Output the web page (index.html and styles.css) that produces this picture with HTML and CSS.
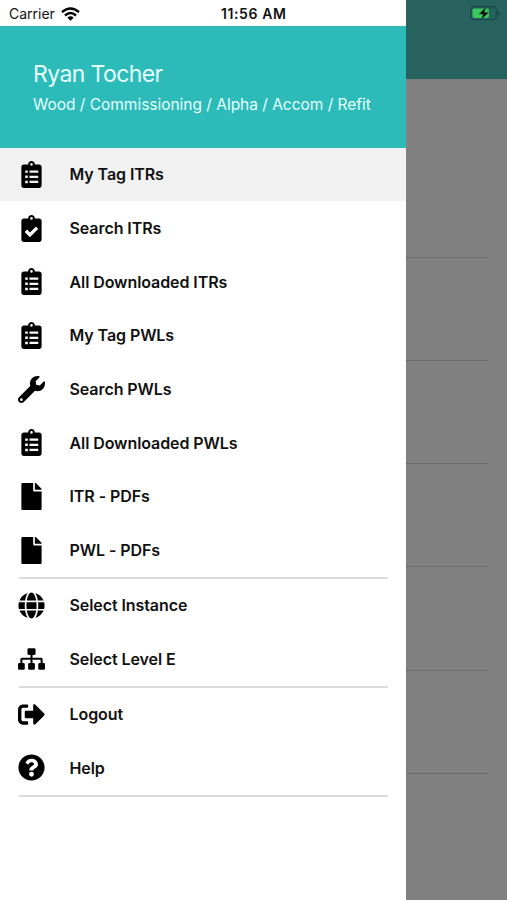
FILE: index.html
```html
<!DOCTYPE html>
<html lang="en">
<head>
  <meta charset="UTF-8" />
  <meta name="viewport" content="width=device-width, initial-scale=1" />
  <title>My Tag ITRs</title>
  <link rel="stylesheet" href="styles.css">
</head>
<body>

  <!-- icons used more than once -->
  <svg class="sprite">
    <symbol id="clipboard-list" viewBox="0 0 384 512">
      <path fill-rule="evenodd" d="M336 64h-80c0-35.300-28.700-64-64-64s-64 28.700-64 64H48C21.500 64 0 85.500 0 112v352c0 26.500 21.500 48 48 48h288c26.500 0 48-21.500 48-48V112c0-26.500-21.500-48-48-48zM192 40a24 24 0 1 1 0 48 24 24 0 0 1 0-48zM72 178h50v46H72zm0 98h50v46H72zm0 98h50v46H72zM154 180h166v42H154zm0 98h166v42H154zm0 98h166v42H154z"/>
    </symbol>
    <symbol id="file" viewBox="0 0 384 512">
      <path d="M224 136V0H24C10.700 0 0 10.700 0 24v464c0 13.300 10.700 24 24 24h336c13.300 0 24-10.700 24-24V160H248c-13.200 0-24-10.800-24-24zm160-14.100v6.100H256V0h6.100c6.400 0 12.500 2.500 17 7l97.900 98c4.500 4.500 7 10.600 7 16.900z"/>
    </symbol>
  </svg>

  <div class="phone">

    <!-- screen behind the drawer -->
    <div class="page">
      <div class="page-header"></div>
      <div class="page-row first"></div>
      <div class="page-row"></div>
      <div class="page-row"></div>
      <div class="page-row"></div>
      <div class="page-row"></div>
      <div class="page-row"></div>
    </div>

    <!-- drawer -->
    <div class="drawer">
      <div class="profile">
        <div class="name">Ryan Tocher</div>
        <div class="level">Wood / Commissioning / Alpha / Accom / Refit</div>
      </div>

      <div class="menu">
        <a class="item active"><span class="icon"><svg width="21" height="27"><use href="#clipboard-list"/></svg></span><span>My Tag ITRs</span></a>
        <a class="item"><span class="icon"><svg width="21" height="27" viewBox="0 0 384 512"><path fill-rule="evenodd" d="M336 64h-80c0-35.300-28.700-64-64-64s-64 28.700-64 64H48C21.500 64 0 85.500 0 112v352c0 26.500 21.500 48 48 48h288c26.500 0 48-21.500 48-48V112c0-26.500-21.500-48-48-48zM192 40a24 24 0 1 1 0 48 24 24 0 0 1 0-48zm121.200 231.800l-143 141.800c-4.700 4.700-12.300 4.600-17-.1l-82.600-83.300c-4.700-4.700-4.600-12.300.1-17L99.100 285c4.700-4.700 12.300-4.600 17 .1l46 46.400 106-105.200c4.700-4.700 12.300-4.600 17 .1l28.200 28.400c4.700 4.700 4.600 12.300-.1 17z"/></svg></span><span>Search ITRs</span></a>
        <a class="item"><span class="icon"><svg width="21" height="27"><use href="#clipboard-list"/></svg></span><span>All Downloaded ITRs</span></a>
        <a class="item"><span class="icon"><svg width="21" height="27"><use href="#clipboard-list"/></svg></span><span>My Tag PWLs</span></a>
        <a class="item"><span class="icon"><svg width="27" height="27" viewBox="0 0 512 512"><path fill-rule="evenodd" d="M507.730 109.100c-2.240-9.030-13.540-12.090-20.120-5.510l-74.360 74.360-67.880-11.310-11.310-67.880 74.360-74.360c6.620-6.620 3.430-17.900-5.660-20.160-47.380-11.740-99.550.91-136.580 37.930-39.640 39.640-50.550 97.100-34.050 147.200L18.740 402.760c-24.990 24.990-24.990 65.510 0 90.500 24.990 24.990 65.510 24.990 90.500 0l213.210-213.210c50.120 16.710 107.470 5.680 147.370-34.220 37.070-37.070 49.700-89.320 37.910-136.730zM64 472a24 24 0 1 1 0-48 24 24 0 0 1 0 48z"/></svg></span><span>Search PWLs</span></a>
        <a class="item"><span class="icon"><svg width="21" height="27"><use href="#clipboard-list"/></svg></span><span>All Downloaded PWLs</span></a>
        <a class="item"><span class="icon"><svg width="21" height="27"><use href="#file"/></svg></span><span>ITR - PDFs</span></a>
        <a class="item"><span class="icon"><svg width="21" height="27"><use href="#file"/></svg></span><span>PWL - PDFs</span></a>
        <div class="divider"></div>
        <a class="item"><span class="icon"><svg width="27" height="27" viewBox="0 0 496 512"><path d="M336.500 160C322 70.700 287.800 8 248 8s-74 62.700-88.500 152h177zM152 256c0 22.200 1.200 43.500 3.300 64h185.300c2.100-20.500 3.300-41.800 3.300-64s-1.200-43.500-3.300-64H155.300c-2.100 20.500-3.300 41.800-3.300 64zm324.700-96c-28.600-67.900-86.500-120.400-158-141.600 24.400 33.800 41.200 84.700 50 141.600h108zM177.200 18.400C105.800 39.600 47.800 92.100 19.300 160h108c8.700-56.900 25.500-107.800 49.900-141.600zM487.400 192H372.700c2.100 21 3.300 42.500 3.300 64s-1.200 43-3.300 64h114.600c5.500-20.500 8.600-41.800 8.600-64s-3.100-43.500-8.500-64zM120 256c0-21.500 1.200-43 3.300-64H8.600C3.200 212.500 0 233.800 0 256s3.200 43.500 8.600 64h114.600c-2-21-3.200-42.500-3.200-64zm39.500 96c14.500 89.300 48.700 152 88.500 152s74-62.700 88.500-152h-177zm159.300 141.600c71.400-21.200 129.400-73.700 158-141.600h-108c-8.800 56.900-25.600 107.800-50 141.600zM19.300 352c28.600 67.900 86.500 120.400 158 141.600-24.400-33.800-41.200-84.700-50-141.600h-108z"/></svg></span><span>Select Instance</span></a>
        <a class="item"><span class="icon"><svg width="27" height="22" viewBox="0 0 640 512"><rect x="224" width="192" height="160" rx="32"/><rect y="352" width="160" height="160" rx="32"/><rect x="240" y="352" width="160" height="160" rx="32"/><rect x="480" y="352" width="160" height="160" rx="32"/><path d="M56 352v-89.600Q56 224 94.400 224H296v-64h48v64h201.600Q584 224 584 262.400V352h-48v-80H344v80h-48v-80H104v80z"/></svg></span><span>Select Level E</span></a>
        <div class="divider"></div>
        <a class="item"><span class="icon"><svg width="27" height="27" viewBox="0 0 512 512"><path d="M497 273L329 441c-15 15-41 4.500-41-17v-96H152c-13.300 0-24-10.700-24-24v-96c0-13.300 10.700-24 24-24h136V88c0-21.400 25.900-32 41-17l168 168c9.300 9.400 9.300 24.600 0 34zM192 436v-40c0-6.600-5.400-12-12-12H96c-17.700 0-32-14.300-32-32V160c0-17.700 14.300-32 32-32h84c6.600 0 12-5.400 12-12V76c0-6.600-5.400-12-12-12H96c-53 0-96 43-96 96v192c0 53 43 96 96 96h84c6.600 0 12-5.400 12-12z"/></svg></span><span>Logout</span></a>
        <a class="item"><span class="icon"><svg width="27" height="27" viewBox="0 0 512 512"><path fill-rule="evenodd" d="M504 256c0 137-111 248-248 248S8 393 8 256C8 119.100 119 8 256 8s248 111.100 248 248zM262.655 90c-54.497 0-89.255 22.957-116.549 63.758-3.536 5.286-2.353 12.415 2.715 16.258l34.699 26.310c5.205 3.947 12.621 3.008 16.665-2.122 17.864-22.658 30.113-35.797 57.303-35.797 20.429 0 45.698 13.148 45.698 32.958 0 14.976-12.363 22.667-32.534 33.976C247.128 238.528 216 254.941 216 296v4c0 6.627 5.373 12 12 12h56c6.627 0 12-5.373 12-12v-1.333c0-28.462 83.186-29.647 83.186-106.667 0-58.002-60.165-102-116.531-102zM256 338a46 46 0 1 0 0 92 46 46 0 0 0 0-92z"/></svg></span><span>Help</span></a>
        <div class="divider"></div>
      </div>
    </div>

    <!-- status bar lies over both -->
    <div class="status-bar">
      <div class="carrier">
        <span>Carrier</span>
        <svg width="19" height="14" viewBox="0 0 19 14"><g fill="none" stroke="#000" stroke-width="2.400"><path d="M1 5.200Q9.500-2.200 18 5.200"/><path d="M4 8.500Q9.500 3.700 15 8.500"/></g><path d="M6.400 10.700Q9.500 8 12.600 10.700L9.500 13.800z"/></svg>
      </div>
      <div class="time">11:56 AM</div>
      <svg class="battery" width="31" height="15" viewBox="0 0 31 15"><rect x=".8" y=".8" width="25.800" height="12.800" rx="3.600" fill="none" stroke="#194a4b" stroke-width="1.400"/><path d="M28 5q2 .8 2 2.300T28 9.500z" fill="#194a4b"/><rect x="2.500" y="2.500" width="16.500" height="9.500" rx="2" fill="#38c75b"/><path d="M15.800 1.500L9 8h4.200l-1.700 5.200L18.500 6.500h-4.300z" fill="#000" stroke="#245f50" stroke-width=".5"/></svg>
    </div>

  </div>

</body>
</html>
```
FILE: styles.css
```css
body {
  margin: 0;
  font-family: Inter, "Liberation Sans", sans-serif;
  color: #111;
}

.sprite {
  display: none;
}

.phone {
  position: relative;
  width: 507px;
  height: 900px;
  overflow: hidden;
}

.page {
  height: 900px;
  background: #808080;
}

.page-header {
  height: 79px;
  background: #28625f;
}

.page-row {
  height: 103.3px;
  margin: 0 19px;
  border-bottom: 1px solid #6a6a6a;
  box-sizing: border-box;
}

.page-row.first {
  height: 178.5px;
}

.drawer {
  position: absolute;
  top: 0;
  left: 0;
  width: 406px;
  height: 900px;
  padding-top: 25.5px;
  background: #fff;
  box-sizing: border-box;
}

.profile {
  height: 122px;
  padding: 34.5px 33px 0;
  background: #2dbbb9;
  color: #e6ffff;
  box-sizing: border-box;
}

.name {
  font-size: 23px;
  line-height: 28px;
  letter-spacing: -0.6px;
}

.level {
  margin-top: 7px;
  font-size: 15.5px;
  line-height: 20px;
  letter-spacing: -0.02px;
  white-space: nowrap;
}

.item {
  display: flex;
  align-items: center;
  height: 53.7px;
  padding-left: 18px;
  font-size: 16px;
  font-weight: 600;
  letter-spacing: -0.08px;
}

.item.active {
  background: #f1f1f1;
}

.icon {
  display: flex;
  justify-content: center;
  width: 27px;
  margin-right: 24.5px;
}

.icon svg {
  fill: #000;
}

.divider {
  height: 2px;
  margin: 0 18px -0.6px 19px;
  background: #dcdcdc;
}

.status-bar {
  position: absolute;
  top: 0;
  left: 0;
  display: flex;
  align-items: center;
  justify-content: space-between;
  width: 507px;
  height: 27px;
  padding: 0 6px 0 9px;
  font-size: 14px;
  box-sizing: border-box;
}

.carrier,
.battery {
  flex: none;
}

.carrier {
  display: flex;
  align-items: center;
  gap: 6px;
  width: 212px;
}

.time {
  flex: 1;
  font-weight: 600;
  letter-spacing: 0.6px;
}
```
